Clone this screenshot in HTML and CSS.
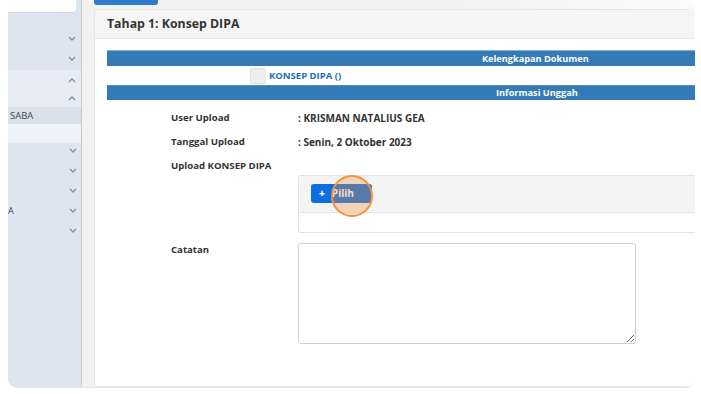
FILE: index.html
```html
<!DOCTYPE html>
<html lang="id">

<head>
    <meta charset="UTF-8">
    <meta name="viewport" content="width=device-width, initial-scale=1.0">
    <title>Tahap 1: Konsep DIPA</title>
    <link rel="stylesheet" href="styles.css">
</head>

<body>
    <div class="frame">
        <!-- menu samping (terpotong) -->
        <div class="sidebar">
            <div class="sb-top"></div>
            <ul class="sb-group g1">
                <li><svg class="chev" viewBox="0 0 8 5"><polyline points="1,1 4,4 7,1" /></svg></li>
                <li><svg class="chev" viewBox="0 0 8 5"><polyline points="1,1 4,4 7,1" /></svg></li>
            </ul>
            <ul class="sb-group g2">
                <li><svg class="chev" viewBox="0 0 8 5"><polyline points="1,4 4,1 7,4" /></svg></li>
                <li><svg class="chev" viewBox="0 0 8 5"><polyline points="1,4 4,1 7,4" /></svg></li>
            </ul>
            <div class="sb-active">SABA</div>
            <div class="sb-light"></div>
            <ul class="sb-group g3">
                <li><svg class="chev" viewBox="0 0 8 5"><polyline points="1,1 4,4 7,1" /></svg></li>
                <li><svg class="chev" viewBox="0 0 8 5"><polyline points="1,1 4,4 7,1" /></svg></li>
                <li><svg class="chev" viewBox="0 0 8 5"><polyline points="1,1 4,4 7,1" /></svg></li>
                <li><span class="cut">A</span><svg class="chev" viewBox="0 0 8 5"><polyline points="1,1 4,4 7,1" /></svg></li>
                <li><svg class="chev" viewBox="0 0 8 5"><polyline points="1,1 4,4 7,1" /></svg></li>
            </ul>
        </div>

        <div class="main">
            <div class="tab"></div>
            <div class="panel">
                <div class="panel-head">Tahap 1: Konsep DIPA</div>
                <div class="panel-body">
                    <div class="bar bar-doc">Kelengkapan Dokumen</div>
                    <div class="doc-row">
                        <span class="check"></span>
                        <a class="doc-link">KONSEP DIPA ()</a>
                    </div>
                    <div class="bar bar-info">Informasi Unggah</div>

                    <div class="info">
                        <div class="label">User Upload</div>
                        <div class="value">: KRISMAN NATALIUS GEA</div>
                        <div class="label">Tanggal Upload</div>
                        <div class="value">: Senin, 2 Oktober 2023</div>
                        <div class="label">Upload KONSEP DIPA</div>
                        <div class="value"></div>
                        <div></div>
                        <div class="upload">
                            <div class="upload-bar">
                                <span class="btn-pilih"><b>+</b>Pilih<span class="click"></span></span>
                            </div>
                            <div class="upload-list"></div>
                        </div>
                        <div class="label label-note">Catatan</div>
                        <div><textarea class="note"></textarea></div>
                    </div>
                </div>
            </div>
        </div>
    </div>
</body>

</html>
```

FILE: styles.css
```css
* {
    padding: 0;
    margin: 0;
    list-style: none;
    box-sizing: border-box;
}

body {
    background: #fff;
    font-family: "Open Sans", "Liberation Sans", sans-serif;
    color: #333;
}

.frame {
    display: flex;
    height: 388px;
    margin: 0 6px 0 8px;
    border-radius: 0 9px 9px 9px;
    overflow: hidden;
    background: #f3f3f3;
    border-bottom: 1px solid #e4e6ea;
}

/* sidebar */
.sidebar {
    width: 74px;
    background: #dfe5ee;
    border-right: 1px solid #c7ccd3;
    font-size: 10px;
    color: #3d4654;
}

.sb-top {
    height: 13px;
    width: 68px;
    background: #fff;
    border-radius: 0 0 4px 0;
    border-bottom: 1px solid #d5d9df;
}

.sb-group li {
    display: flex;
    align-items: center;
    justify-content: flex-end;
    padding-right: 5px;
}

.g1 {
    height: 57px;
    padding-top: 15px;
}

.g1 li {
    height: 20px;
}

.g2 {
    height: 37px;
    padding-top: 1px;
    background: #e8ecf2;
}

.g2 li {
    height: 18px;
}

.g3 {
    margin-top: -3px;
}

.g3 li {
    height: 20px;
    padding-right: 4px;
}

.cut {
    margin-right: auto;
    font-size: 9px;
}

.chev {
    width: 8px;
    height: 5px;
    fill: none;
    stroke: #8592a6;
    stroke-width: 1.4;
}

.sb-active {
    height: 17px;
    line-height: 17px;
    padding-left: 2px;
    background: #d9e0ea;
    font-size: 9.5px;
}

.sb-light {
    height: 19px;
    background: #eef1f5;
}

/* konten */
.main {
    flex: 1;
    display: flex;
    flex-direction: column;
    padding-left: 12px;
    background: linear-gradient(to right, #f2f2f2 60%, #fafafa);
}

.tab {
    width: 64px;
    height: 5px;
    margin-bottom: 4px;
    background: #2f7ad1;
    border-radius: 0 0 3px 3px;
}

.panel {
    flex: 1;
    background: #fff;
    border: 1px solid #e5e5e5;
    border-right: none;
    border-radius: 0 9px 0 0;
    overflow: hidden;
}

.panel-head {
    height: 29px;
    line-height: 28px;
    padding-left: 12px;
    background: #f5f5f5;
    border-bottom: 1px solid #e8e8e8;
    font-size: 12.3px;
    font-weight: bold;
    color: #333;
}

.panel-body {
    padding: 11px 0 0 12px;
}

.bar {
    height: 16px;
    line-height: 15px;
    background: #337ab7;
    border-top: 1px solid #7fb0de;
    color: #fff;
    font-size: 9.2px;
    font-weight: bold;
    white-space: nowrap;
}

.bar-doc {
    padding-left: 375px;
}

.bar-info {
    height: 15px;
    line-height: 14px;
    padding-left: 389px;
    border-top-color: #4f8cc6;
}

.doc-row {
    display: flex;
    align-items: center;
    height: 19px;
    padding-left: 143px;
}

.check {
    width: 16px;
    height: 16px;
    background: #eeeeee;
    border: 1px solid #e0e0e0;
    border-radius: 2px;
}

.doc-link {
    margin-left: 3px;
    color: #1e6cc4;
    font-size: 9.5px;
    font-weight: bold;
}

.info {
    display: grid;
    grid-template-columns: 127px 1fr;
    grid-auto-rows: minmax(24px, auto);
    margin: 7px 0 0 64px;
    font-size: 9.6px;
    font-weight: bold;
    color: #333;
}

.value {
    font-size: 10px;
}

.label,
.value {
    line-height: 22px;
}

.upload {
    height: 58px;
    margin-top: -4px;
    border: 1px solid #e2e2e2;
    border-right: none;
    border-radius: 3px 0 0 3px;
    background: #fff;
}

.upload-bar {
    height: 37px;
    padding: 8px 0 0 12px;
    background: #f4f4f4;
    border-bottom: 1px solid #e4e4e4;
}

.btn-pilih {
    position: relative;
    display: inline-block;
    width: 61px;
    height: 19px;
    line-height: 19px;
    padding-left: 8px;
    background: #0d6fe0;
    border-radius: 3px;
    color: #fff;
    font-size: 10px;
}

.btn-pilih b {
    margin-right: 7px;
}

/* penanda klik */
.click {
    position: absolute;
    left: 20px;
    top: -9px;
    width: 42px;
    height: 42px;
    border-radius: 50%;
    border: 2px solid #f7923a;
    background: rgba(247, 146, 58, 0.32);
}

.label-note {
    margin-top: 6px;
}

.note {
    display: block;
    width: 338px;
    height: 101px;
    margin-top: 10px;
    border: 1px solid #d0d0d0;
    border-radius: 3px;
    background: #fff;
}
```
